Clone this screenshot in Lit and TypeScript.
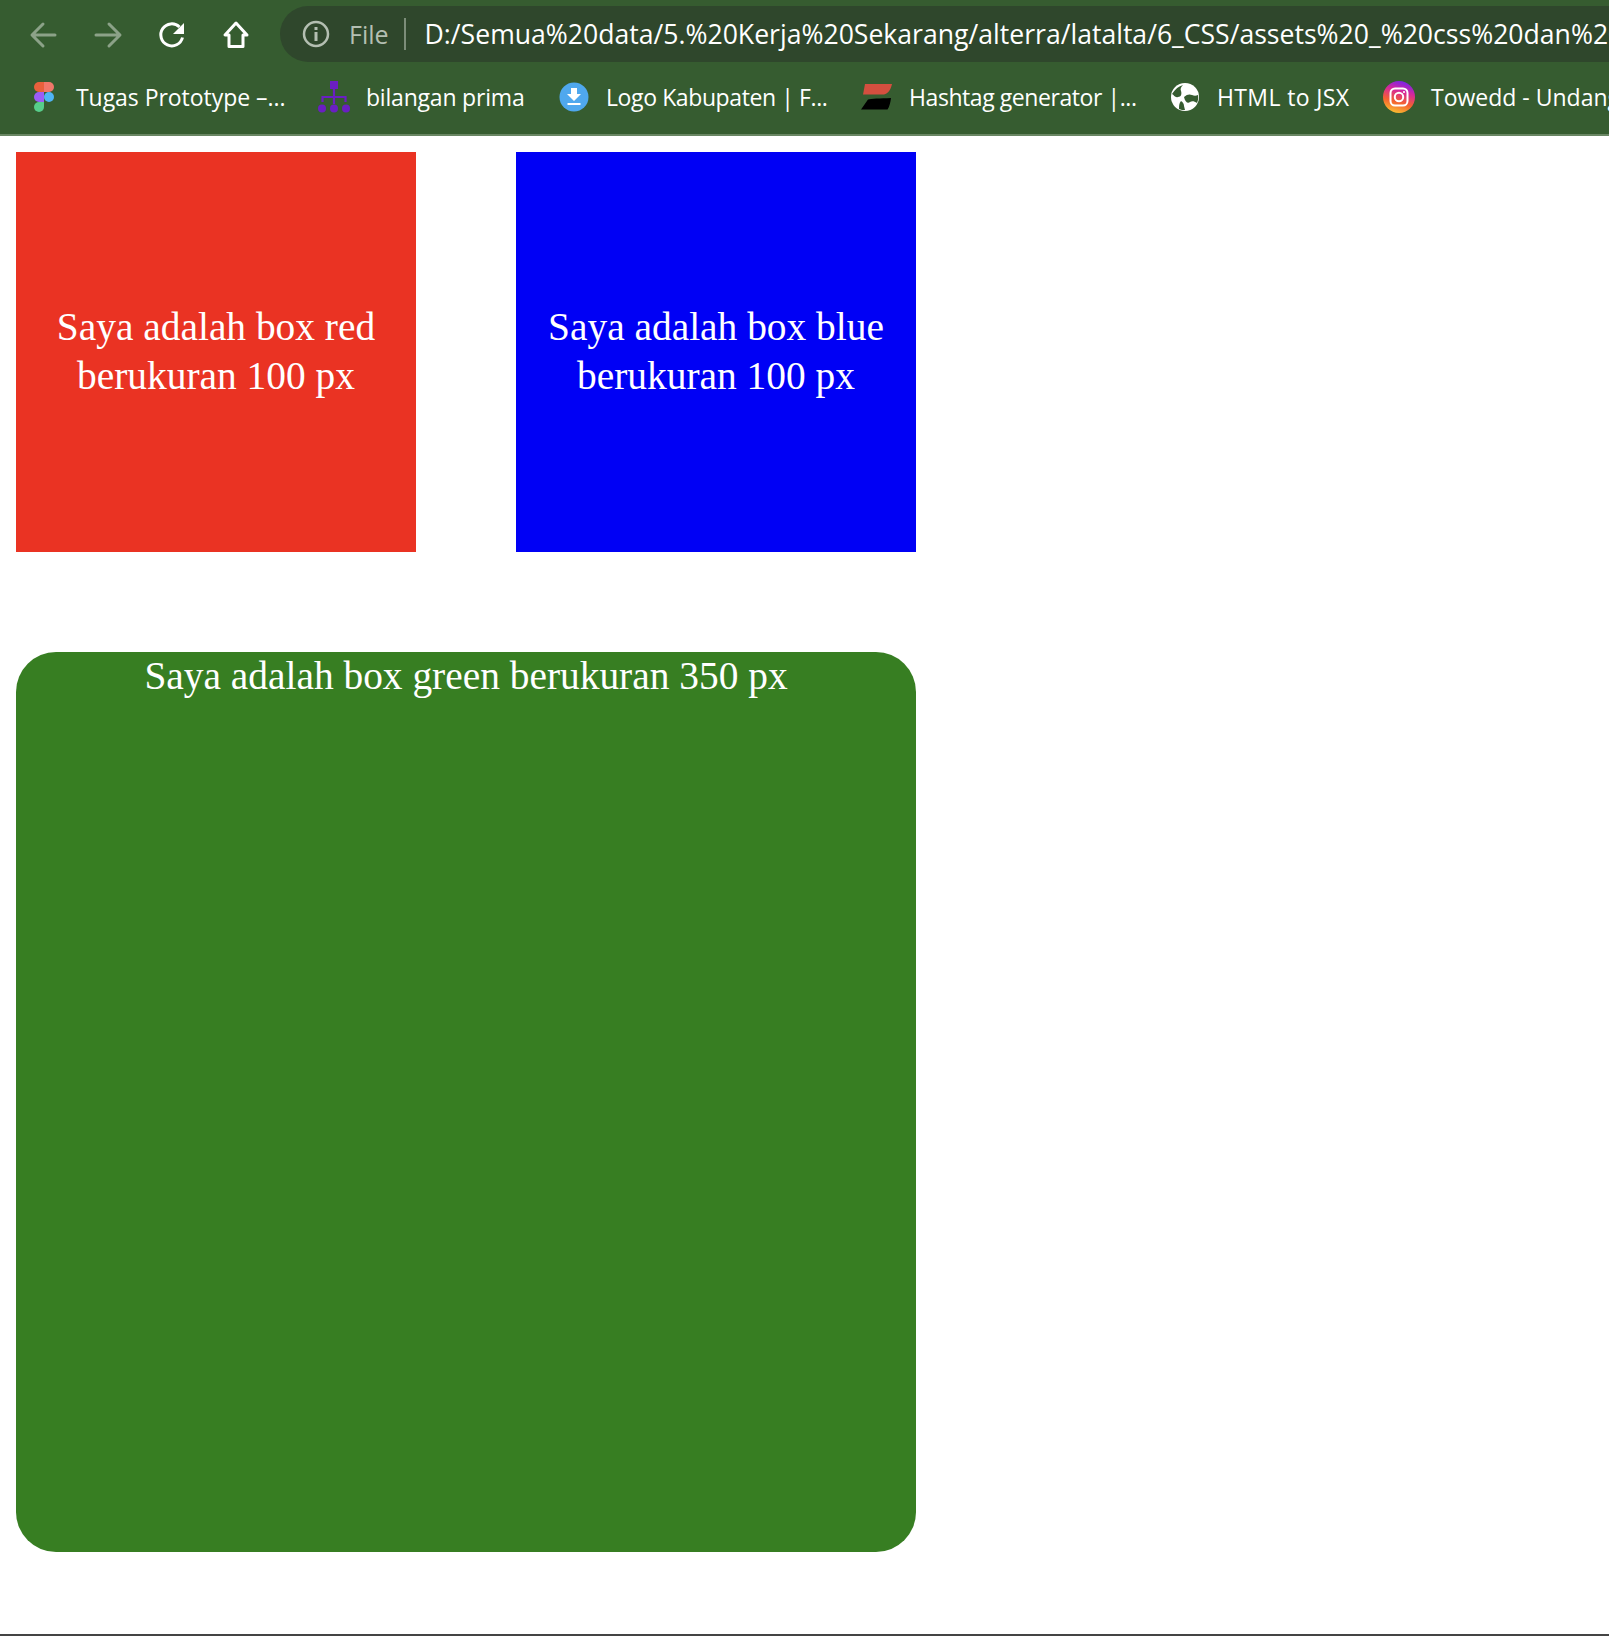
import { LitElement, html, css } from "lit";
import { customElement } from "lit/decorators.js";

const URL_TEXT =
  "D:/Semua%20data/5.%20Kerja%20Sekarang/alterra/latalta/6_CSS/assets%20_%20css%20dan%20";

const figmaIcon = html`<svg width="20" height="30" viewBox="0 0 20 30">
  <path d="M10 0H5a5 5 0 0 0 0 10h5z" fill="#e8603c" />
  <path d="M10 0h5a5 5 0 0 1 0 10h-5z" fill="#f0776a" />
  <path d="M10 10H5a5 5 0 0 0 0 10h5z" fill="#9b5cf6" />
  <circle cx="15" cy="15" r="5" fill="#4fb4f5" />
  <path d="M10 20H5a5 5 0 1 0 5 5z" fill="#57cd8a" />
</svg>`;

const treeIcon = html`<svg width="32" height="32" viewBox="0 0 32 32">
  <rect x="12" y="0" width="8" height="8" fill="#6a1fc2" />
  <path d="M16 8v15M4.500 21v-5h23v5" fill="none" stroke="#6a1fc2" stroke-width="2.200" />
  <circle cx="4" cy="27.500" r="4" fill="#6a1fc2" />
  <circle cx="16" cy="27.500" r="4" fill="#6a1fc2" />
  <circle cx="28" cy="27.500" r="4" fill="#6a1fc2" />
</svg>`;

const downloadIcon = html`<svg width="30" height="30" viewBox="0 0 30 30">
  <circle cx="15" cy="15" r="14.500" fill="#4fa8ee" />
  <path d="M12 7h6v6h4l-7 7-7-7h4z" fill="#fff" transform="translate(0 -1)" />
  <rect x="8.500" y="21" width="13" height="2" fill="#fff" />
</svg>`;

const hashtagIcon = html`<svg width="32" height="28" viewBox="0 0 32 28">
  <path d="M4 1h27c-1 5-4 10-8 10.500H2z" fill="#d44f3f" />
  <path d="M7 16.500c3-1 12-1 23-1.500-.5 4-1.500 9-3.500 11.500H0z" fill="#000" />
</svg>`;

const globeIcon = html`<svg width="28" height="28" viewBox="0 0 28 28">
  <circle cx="14" cy="14" r="14" fill="#fff" />
  <path d="M1 11c3-5 7-8 11-9-2 2-3 4-2 6 1 3 0 6-3 6-3 1-4-2-6-3z" fill="#365c30" />
  <path d="M13 14c3-3 6-3 8-2 2 1 4 1 6 0 .5 3 0 6-1 8-3-2-5-2-7-1-2 2-5 0-6-5z" fill="#365c30" />
  <path d="M10 18c2 1 3 3 3 5l1 4c-2 0-4 0-6-1 0-3 0-6 2-8z" fill="#365c30" />
</svg>`;

const instagramIcon = html`<svg width="32" height="32" viewBox="0 0 32 32">
  <defs>
    <linearGradient id="ig" x1="0.300" y1="1" x2="0.600" y2="0">
      <stop offset="0" stop-color="#fbc431" />
      <stop offset="0.350" stop-color="#f4622f" />
      <stop offset="0.700" stop-color="#d6279c" />
      <stop offset="1" stop-color="#7a24e8" />
    </linearGradient>
  </defs>
  <circle cx="16" cy="16" r="16" fill="url(#ig)" />
  <rect x="7.500" y="7.500" width="17" height="17" rx="4.500" fill="none" stroke="#fff" stroke-width="2" />
  <circle cx="16" cy="16" r="4.200" fill="none" stroke="#fff" stroke-width="2" />
  <circle cx="21" cy="11" r="1.100" fill="#fff" />
</svg>`;

// widths follow the truncated labels of the bookmarks bar
const bookmarks = [
  { icon: figmaIcon, label: "Tugas Prototype –...", width: 209, tracking: -0.05 },
  { icon: treeIcon, label: "bilangan prima", width: 159, tracking: -0.2 },
  { icon: downloadIcon, label: "Logo Kabupaten | F...", width: 222, tracking: -0.4 },
  { icon: hashtagIcon, label: "Hashtag generator |...", width: 227, tracking: -0.43 },
  { icon: globeIcon, label: "HTML to JSX", width: 133, tracking: 0.37 },
  { icon: instagramIcon, label: "Towedd - Undangan", width: 200, tracking: 0 },
];

@customElement("app-root")
class AppRoot extends LitElement {
  static styles = css`
    :host {
      display: flex;
      flex-direction: column;
      height: 1636px;
      overflow: hidden;
      background: #fff;
    }

    .chrome {
      flex: none;
      background: #365c30;
      border-bottom: 2px solid #698663;
      font-family: "Open Sans", "Noto Sans", sans-serif;
      color: #fff;
    }

    .toolbar {
      display: flex;
      align-items: center;
      height: 68px;
      padding: 0 0 0 28px;
      box-sizing: border-box;
    }

    .nav {
      flex: none;
      width: 32px;
      height: 32px;
      margin-right: 32px;
    }

    .nav svg {
      display: block;
    }

    .omnibox {
      flex: none;
      display: flex;
      align-items: center;
      width: 1400px;
      height: 56px;
      margin-left: -4px;
      padding-left: 21px;
      box-sizing: border-box;
      background: #2f472c;
      border-radius: 28px 0 0 28px;
      font-size: 26.600px;
      white-space: nowrap;
    }

    .omnibox svg {
      flex: none;
    }

    .scheme {
      flex: none;
      color: #b4bfb2;
      font-size: 25px;
      margin-left: 18px;
    }

    .divider {
      flex: none;
      width: 2px;
      height: 32px;
      margin: 0 19px 0 15px;
      background: #7c8d79;
    }

    .url {
      flex: none;
    }

    .bookmarks {
      display: flex;
      align-items: center;
      gap: 33px;
      height: 66px;
      padding: 0 0 8px 28px;
      box-sizing: border-box;
      font-size: 23px;
      white-space: nowrap;
    }

    .bookmark {
      flex: none;
      display: flex;
      align-items: center;
      gap: 16px;
    }

    .bookmark-icon {
      flex: none;
      display: flex;
      justify-content: center;
      align-items: center;
      width: 32px;
      height: 32px;
    }

    .page {
      flex: 1;
      display: grid;
      grid-template-columns: 400px 400px;
      grid-template-rows: 400px 900px;
      column-gap: 100px;
      row-gap: 100px;
      align-content: start;
      padding: 16px;
      font-family: "Liberation Serif", "DejaVu Serif", serif;
      font-size: 39.400px;
      line-height: 49px;
      color: #fff;
      text-align: center;
    }

    .box {
      display: flex;
      align-items: center;
      justify-content: center;
    }

    .red {
      background: #ea3323;
    }

    .blue {
      background: #0000f5;
    }

    .green {
      grid-column: 1 / span 2;
      background: #377e22;
      border-radius: 40px;
      line-height: 48px;
    }

    .taskbar-edge {
      flex: none;
      height: 2px;
      background: #444;
    }
  `;

  render() {
    return html`
      <div class="chrome">
        <div class="toolbar">
          <div class="nav">
            <svg width="32" height="32" viewBox="0 0 32 32" fill="none" stroke="#8ca288" stroke-width="3" stroke-linecap="round" stroke-linejoin="round">
              <path d="M27 17H5M15 6L4 17l11 11" />
            </svg>
          </div>
          <div class="nav">
            <svg width="32" height="32" viewBox="0 0 32 32" fill="none" stroke="#8ca288" stroke-width="3" stroke-linecap="round" stroke-linejoin="round">
              <path d="M4 17h22M17 6l11 11-11 11" />
            </svg>
          </div>
          <div class="nav">
            <svg width="32" height="32" viewBox="0 0 32 32">
              <path d="M26.500 19.500A11 11 0 1 1 23.500 9" fill="none" stroke="#fff" stroke-width="3" />
              <path d="M28 5v11H17z" fill="#fff" />
            </svg>
          </div>
          <div class="nav">
            <svg width="32" height="32" viewBox="0 0 32 32" fill="none" stroke="#fff" stroke-width="3" stroke-linejoin="round">
              <path d="M16 5L5 17h4v11.500h14V17h4z" />
            </svg>
          </div>
          <div class="omnibox">
            <svg width="30" height="30" viewBox="0 0 30 30">
              <circle cx="15" cy="15" r="12" fill="none" stroke="#b4bfb2" stroke-width="2.500" />
              <rect x="13.500" y="13" width="3" height="9" fill="#b4bfb2" />
              <rect x="13.500" y="8" width="3" height="3" fill="#b4bfb2" />
            </svg>
            <span class="scheme">File</span>
            <span class="divider"></span>
            <span class="url">${URL_TEXT}</span>
          </div>
        </div>
        <div class="bookmarks">
          ${bookmarks.map(
            (b) => html`
              <div class="bookmark">
                <span class="bookmark-icon">${b.icon}</span>
                <span style="width: ${b.width}px; letter-spacing: ${b.tracking}px">${b.label}</span>
              </div>
            `
          )}
        </div>
      </div>
      <div class="page">
        <div class="box red"><span>Saya adalah box red<br />berukuran 100 px</span></div>
        <div class="box blue"><span>Saya adalah box blue<br />berukuran 100 px</span></div>
        <div class="green">Saya adalah box green berukuran 350 px</div>
      </div>
      <div class="taskbar-edge"></div>
    `;
  }
}
